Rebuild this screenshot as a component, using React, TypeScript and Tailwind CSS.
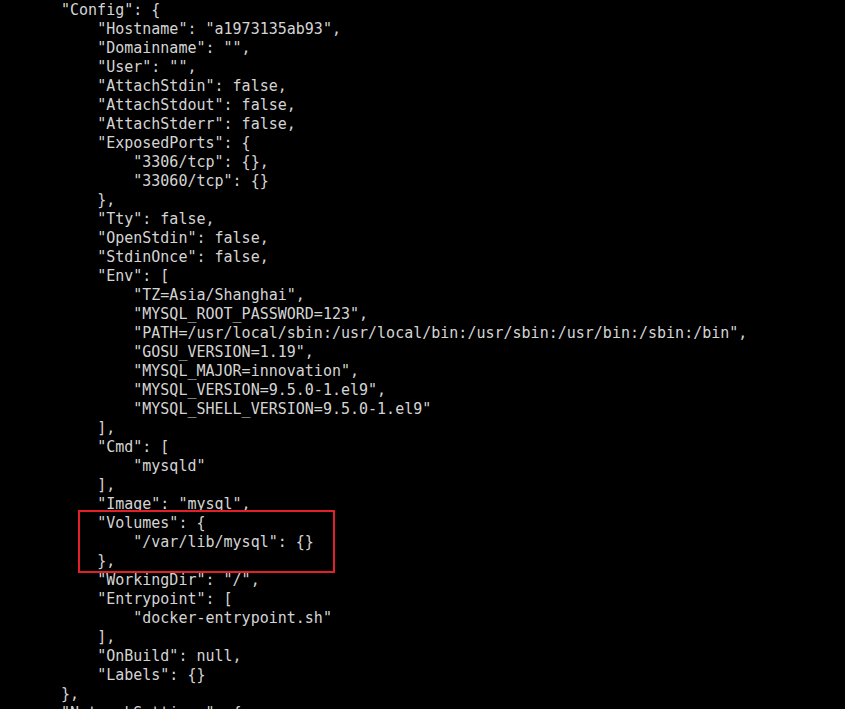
const lines: [number, string][] = [
  [0, '"Config": {'],
  [1, '"Hostname": "a1973135ab93",'],
  [1, '"Domainname": "",'],
  [1, '"User": "",'],
  [1, '"AttachStdin": false,'],
  [1, '"AttachStdout": false,'],
  [1, '"AttachStderr": false,'],
  [1, '"ExposedPorts": {'],
  [2, '"3306/tcp": {},'],
  [2, '"33060/tcp": {}'],
  [1, '},'],
  [1, '"Tty": false,'],
  [1, '"OpenStdin": false,'],
  [1, '"StdinOnce": false,'],
  [1, '"Env": ['],
  [2, '"TZ=Asia/Shanghai",'],
  [2, '"MYSQL_ROOT_PASSWORD=123",'],
  [2, '"PATH=/usr/local/sbin:/usr/local/bin:/usr/sbin:/usr/bin:/sbin:/bin",'],
  [2, '"GOSU_VERSION=1.19",'],
  [2, '"MYSQL_MAJOR=innovation",'],
  [2, '"MYSQL_VERSION=9.5.0-1.el9",'],
  [2, '"MYSQL_SHELL_VERSION=9.5.0-1.el9"'],
  [1, '],'],
  [1, '"Cmd": ['],
  [2, '"mysqld"'],
  [1, '],'],
  [1, '"Image": "mysql",'],
  [1, '"Volumes": {'],
  [2, '"/var/lib/mysql": {}'],
  [1, '},'],
  [1, '"WorkingDir": "/",'],
  [1, '"Entrypoint": ['],
  [2, '"docker-entrypoint.sh"'],
  [1, '],'],
  [1, '"OnBuild": null,'],
  [1, '"Labels": {}'],
  [0, '},'],
  [0, '"NetworkSettings": {'],
];

export default function App() {
  return (
    <div className="relative h-[709px] w-[845px] overflow-hidden bg-black">
      <div className="pl-[61px] pt-px font-['DejaVu_Sans_Mono',monospace] text-[15px] leading-[19px] text-[#d4d4d4]">
        {lines.map(([lvl, text], i) => (
          <div key={i} className="whitespace-pre">
            {'    '.repeat(lvl)}
            {text}
          </div>
        ))}
      </div>
      {/* highlight around Volumes */}
      <div className="absolute left-[78px] top-[510px] h-[63px] w-[257px] border-2 border-[#e3202a]" />
    </div>
  );
}
